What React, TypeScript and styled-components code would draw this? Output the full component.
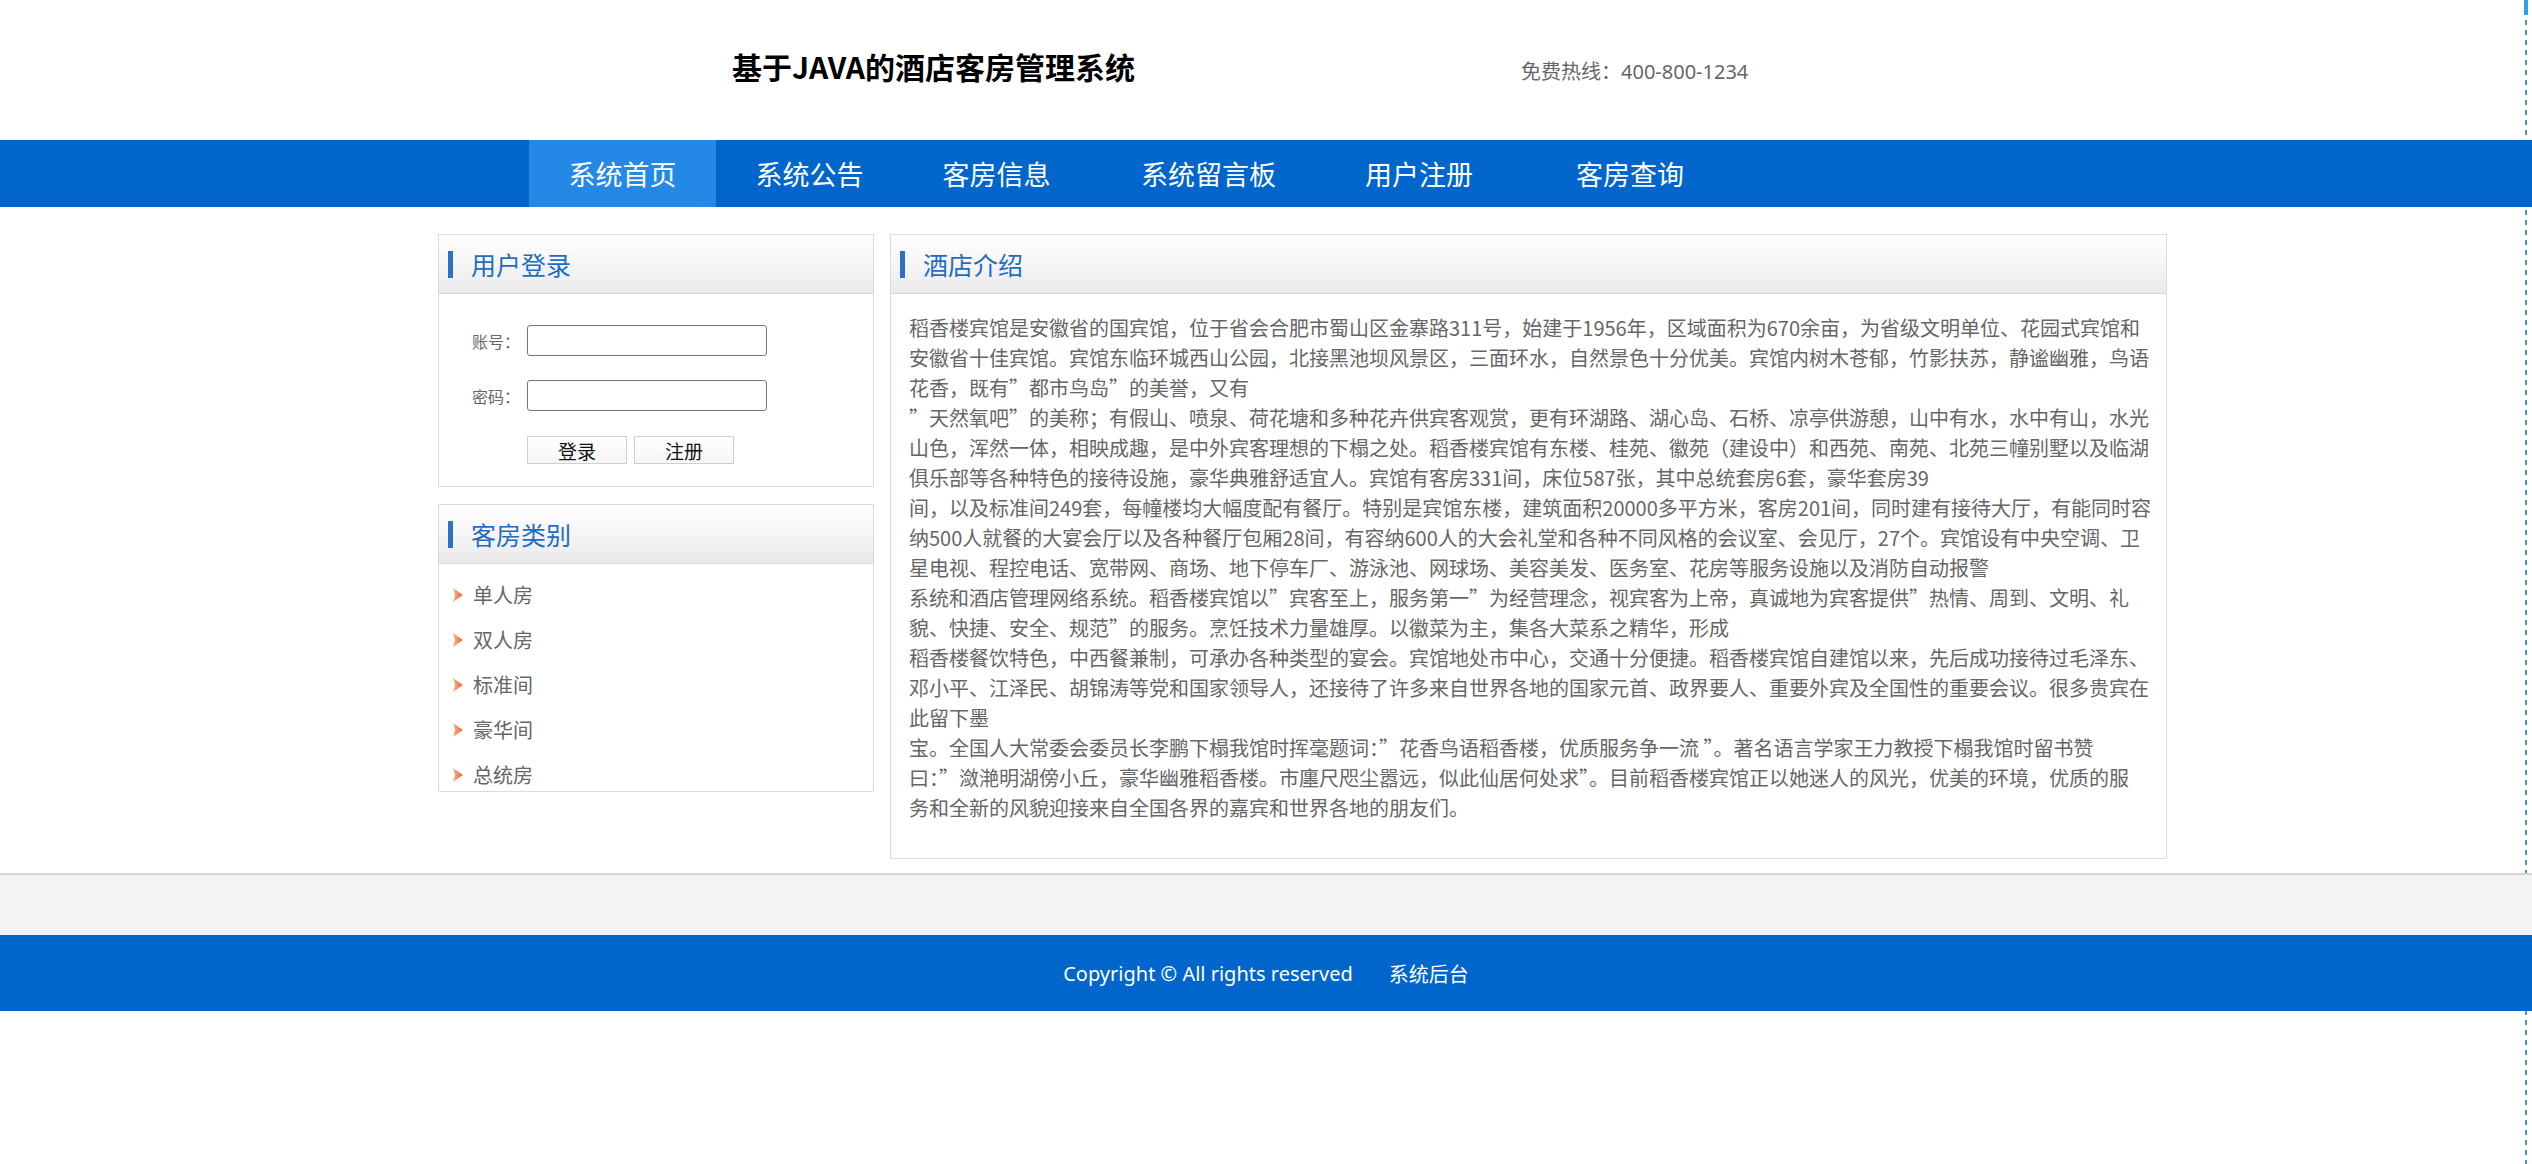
import React from 'react';
import styled, { createGlobalStyle } from 'styled-components';

const GlobalStyle = createGlobalStyle`
  html, body {
    margin: 0;
    padding: 0;
  }
  body {
    font-family: "Noto Sans CJK SC", "Noto Sans", sans-serif;
    background-color: #fff;
    background-image:
      linear-gradient(#2ea3ea, #2ea3ea),
      repeating-linear-gradient(to bottom, #3e9cc2 0 5px, transparent 5px 10px);
    background-size: 4px 15px, 2px 100%;
    background-position: 2524px 0, 2525px 0;
    background-repeat: no-repeat;
    min-height: 1164px;
  }
`;

const Header = styled.header`
  height: 140px;
  display: grid;
  grid-template-columns: 789px auto;
  align-items: start;
  padding-left: 732px;
  box-sizing: border-box;
`;

const SiteTitle = styled.h1`
  margin: 48px 0 0;
  font-size: 30px;
  line-height: 36px;
  font-weight: 700;
  color: #000;
  white-space: nowrap;
`;

const Hotline = styled.div`
  margin-top: 60px;
  font-family: "Noto Sans", "Noto Sans CJK SC", sans-serif;
  font-size: 20px;
  line-height: 24px;
  color: #666;
  white-space: nowrap;
`;

const NavBar = styled.nav`
  height: 67px;
  background: #0066cc;
  display: flex;
  padding-left: 529px;
`;

const NavItem = styled.a<{ $width: number; $active?: boolean }>`
  width: ${p => p.$width}px;
  height: 100%;
  display: flex;
  align-items: center;
  justify-content: center;
  font-size: 27px;
  color: #fff;
  text-decoration: none;
  background: ${p => (p.$active ? '#2488e6' : 'transparent')};
  white-space: nowrap;
`;

const Main = styled.main`
  display: flex;
  gap: 16px;
  margin: 27px 0 0 438px;
`;

const Side = styled.div`
  width: 436px;
  display: flex;
  flex-direction: column;
  gap: 17px;
`;

const Panel = styled.section<{ $width?: number }>`
  width: ${p => (p.$width ? `${p.$width}px` : '100%')};
  border: 1px solid #dcdcdc;
  box-sizing: border-box;
  background: #fff;
`;

const PanelHead = styled.div`
  height: 58px;
  border-bottom: 1px solid #d6d6d6;
  background: linear-gradient(to bottom, #ffffff 0%, #f7f7f7 45%, #e9e9e9 100%);
  display: flex;
  align-items: center;
  padding-left: 9px;
`;

const HeadBar = styled.span`
  width: 5px;
  height: 27px;
  background: #2b72c6;
  margin-right: 18px;
`;

const HeadTitle = styled.h2`
  margin: 0;
  font-size: 25px;
  font-weight: 400;
  color: #1f6dc3;
  white-space: nowrap;
`;

const LoginBody = styled.form`
  height: 192px;
  box-sizing: border-box;
  padding: 31px 0 0 33px;
  display: flex;
  flex-direction: column;
  gap: 24px;
`;

const FieldRow = styled.div`
  display: flex;
  align-items: center;
`;

const FieldLabel = styled.label`
  width: 55px;
  font-size: 16px;
  color: #666;
  white-space: nowrap;
`;

const Field = styled.input`
  width: 240px;
  height: 31px;
  box-sizing: border-box;
  border: 1px solid #767676;
  border-radius: 3px;
  padding: 0 4px;
  background: #fff;
  font: inherit;
`;

const ButtonRow = styled.div`
  display: flex;
  gap: 7px;
  padding-left: 55px;
  margin-top: 1px;
`;

const FormButton = styled.button`
  width: 100px;
  height: 28px;
  border: 1px solid #cfcfcf;
  background: linear-gradient(#ffffff, #f6f6f6);
  font-family: inherit;
  font-size: 19px;
  line-height: 1;
  color: #111;
  padding: 0;
`;

const CategoryBody = styled.ul`
  height: 227px;
  overflow: hidden;
  margin: 0;
  padding: 8px 0 0 13px;
  box-sizing: border-box;
  list-style: none;
`;

const CategoryItem = styled.li`
  height: 45px;
  display: flex;
  align-items: center;
  gap: 10px;
  font-size: 20px;
  color: #666;
`;

const ContentBody = styled.div`
  padding: 19px 12px 35px 18px;
  font-size: 20px;
  line-height: 30px;
  color: #666;
`;

const TextLine = styled.div`
  white-space: nowrap;
`;

const FooterBand = styled.div`
  margin-top: 14px;
  height: 60px;
  border-top: 2px solid #d4d4d4;
  background: #f3f3f3;
`;

const FooterBar = styled.footer`
  height: 76px;
  background: #0066cc;
  display: flex;
  align-items: center;
  justify-content: center;
  gap: 36px;
  font-size: 20px;
  color: #fff;
`;

const Copyright = styled.span`
  font-family: "Noto Sans", "Noto Sans CJK SC", sans-serif;
`;

const FooterLink = styled.a`
  color: #fff;
  text-decoration: none;
`;

const Arrow = () => (
  <svg width="11" height="14" viewBox="0 0 11 14">
    <defs>
      <linearGradient id="arrowFill" x1="0" y1="0" x2="1" y2="0">
        <stop offset="0" stopColor="#f7b28b" />
        <stop offset="1" stopColor="#e9692f" />
      </linearGradient>
    </defs>
    <polygon points="1,0 11,7 1,14 3,7" fill="url(#arrowFill)" />
  </svg>
);

const navItems = [
  { label: '系统首页', width: 187, active: true },
  { label: '系统公告', width: 187 },
  { label: '客房信息', width: 187 },
  { label: '系统留言板', width: 237 },
  { label: '用户注册', width: 184 },
  { label: '客房查询', width: 238 },
];

const categories = ['单人房', '双人房', '标准间', '豪华间', '总统房'];

const introLines = [
  '稻香楼宾馆是安徽省的国宾馆，位于省会合肥市蜀山区金寨路311号，始建于1956年，区域面积为670余亩，为省级文明单位、花园式宾馆和',
  '安徽省十佳宾馆。宾馆东临环城西山公园，北接黑池坝风景区，三面环水，自然景色十分优美。宾馆内树木苍郁，竹影扶苏，静谧幽雅，鸟语',
  '花香，既有”都市鸟岛”的美誉，又有',
  '”天然氧吧”的美称；有假山、喷泉、荷花塘和多种花卉供宾客观赏，更有环湖路、湖心岛、石桥、凉亭供游憩，山中有水，水中有山，水光',
  '山色，浑然一体，相映成趣，是中外宾客理想的下榻之处。稻香楼宾馆有东楼、桂苑、徽苑（建设中）和西苑、南苑、北苑三幢别墅以及临湖',
  '俱乐部等各种特色的接待设施，豪华典雅舒适宜人。宾馆有客房331间，床位587张，其中总统套房6套，豪华套房39',
  '间，以及标准间249套，每幢楼均大幅度配有餐厅。特别是宾馆东楼，建筑面积20000多平方米，客房201间，同时建有接待大厅，有能同时容',
  '纳500人就餐的大宴会厅以及各种餐厅包厢28间，有容纳600人的大会礼堂和各种不同风格的会议室、会见厅，27个。宾馆设有中央空调、卫',
  '星电视、程控电话、宽带网、商场、地下停车厂、游泳池、网球场、美容美发、医务室、花房等服务设施以及消防自动报警',
  '系统和酒店管理网络系统。稻香楼宾馆以”宾客至上，服务第一”为经营理念，视宾客为上帝，真诚地为宾客提供”热情、周到、文明、礼',
  '貌、快捷、安全、规范”的服务。烹饪技术力量雄厚。以徽菜为主，集各大菜系之精华，形成',
  '稻香楼餐饮特色，中西餐兼制，可承办各种类型的宴会。宾馆地处市中心，交通十分便捷。稻香楼宾馆自建馆以来，先后成功接待过毛泽东、',
  '邓小平、江泽民、胡锦涛等党和国家领导人，还接待了许多来自世界各地的国家元首、政界要人、重要外宾及全国性的重要会议。很多贵宾在',
  '此留下墨',
  '宝。全国人大常委会委员长李鹏下榻我馆时挥毫题词：”花香鸟语稻香楼，优质服务争一流 ”。著名语言学家王力教授下榻我馆时留书赞',
  '曰：”潋滟明湖傍小丘，豪华幽雅稻香楼。市廛尺咫尘嚣远，似此仙居何处求”。目前稻香楼宾馆正以她迷人的风光，优美的环境，优质的服',
  '务和全新的风貌迎接来自全国各界的嘉宾和世界各地的朋友们。',
];

function App() {
  return (
    <>
      <GlobalStyle />
      <Header>
        <SiteTitle>基于JAVA的酒店客房管理系统</SiteTitle>
        <Hotline>免费热线：400-800-1234</Hotline>
      </Header>
      <NavBar>
        {navItems.map(item => (
          <NavItem key={item.label} href="#" $width={item.width} $active={item.active}>
            {item.label}
          </NavItem>
        ))}
      </NavBar>
      <Main>
        <Side>
          <Panel>
            <PanelHead>
              <HeadBar />
              <HeadTitle>用户登录</HeadTitle>
            </PanelHead>
            <LoginBody onSubmit={e => e.preventDefault()}>
              <FieldRow>
                <FieldLabel>账号：</FieldLabel>
                <Field type="text" />
              </FieldRow>
              <FieldRow>
                <FieldLabel>密码：</FieldLabel>
                <Field type="password" />
              </FieldRow>
              <ButtonRow>
                <FormButton type="submit">登录</FormButton>
                <FormButton type="button">注册</FormButton>
              </ButtonRow>
            </LoginBody>
          </Panel>
          <Panel>
            <PanelHead>
              <HeadBar />
              <HeadTitle>客房类别</HeadTitle>
            </PanelHead>
            <CategoryBody>
              {categories.map(c => (
                <CategoryItem key={c}>
                  <Arrow />
                  {c}
                </CategoryItem>
              ))}
            </CategoryBody>
          </Panel>
        </Side>
        <Panel $width={1277}>
          <PanelHead>
            <HeadBar />
            <HeadTitle>酒店介绍</HeadTitle>
          </PanelHead>
          <ContentBody>
            {introLines.map((line, i) => (
              <TextLine key={i}>{line}</TextLine>
            ))}
          </ContentBody>
        </Panel>
      </Main>
      <FooterBand />
      <FooterBar>
        <Copyright>Copyright © All rights reserved</Copyright>
        <FooterLink href="#">系统后台</FooterLink>
      </FooterBar>
    </>
  );
}

export default App;
